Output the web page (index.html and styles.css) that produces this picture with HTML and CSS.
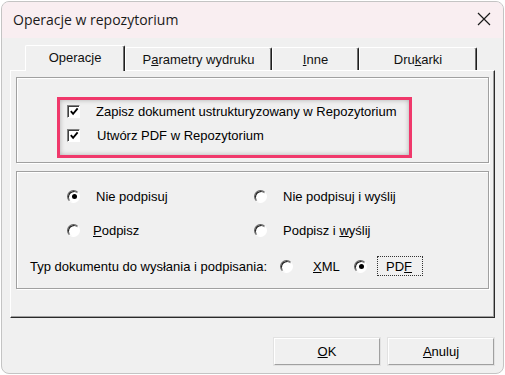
FILE: index.html
```html
<!DOCTYPE html>
<html lang="pl">
<head>
<meta charset="utf-8">
<link rel="stylesheet" href="styles.css">
</head>
<body>
<div class="window">
  <div class="titlebar">
    <span class="title">Operacje w repozytorium</span>
    <svg class="close" width="14" height="14" viewBox="0 0 14 14"><path d="M1 1 L13 13 M13 1 L1 13" stroke="#1a1a1a" stroke-width="1.2" fill="none"/></svg>
  </div>
  <div class="body">
    <div class="tabs">
      <div class="tab tab-sel t1">Operacje</div>
      <div class="tab t2">P<u>a</u>rametry wydruku</div>
      <div class="tab t3"><u>I</u>nne</div>
      <div class="tab t4">Dru<u>k</u>arki</div>
    </div>
    <div class="panel">
      <div class="group g1">
        <div class="highlight">
          <div class="row"><span class="check"><svg width="11" height="11" viewBox="0 0 11 11"><path d="M2 5 L4.5 8 L9.5 2" stroke="#000" stroke-width="2" fill="none"/></svg></span><span class="lbl">Zapisz dokument ustrukturyzowany w Repozytorium</span></div>
          <div class="row"><span class="check"><svg width="11" height="11" viewBox="0 0 11 11"><path d="M2 5 L4.5 8 L9.5 2" stroke="#000" stroke-width="2" fill="none"/></svg></span><span class="lbl lbl2">Utwórz PDF w Repozytorium</span></div>
        </div>
      </div>
      <div class="group g2">
        <div class="grid">
          <div class="opt"><span class="radio on"></span><span class="lbl">Nie podpisuj</span></div>
          <div class="opt"><span class="radio"></span><span class="lbl">Nie podpisuj i wyślij</span></div>
          <div class="opt"><span class="radio"></span><span class="lbl lbl-p"><u>P</u>odpisz</span></div>
          <div class="opt"><span class="radio"></span><span class="lbl lbl-q">Podpisz i <u>w</u>yślij</span></div>
        </div>
        <div class="typ">
          <span class="typ-label">Typ dokumentu do wysłania i podpisania:</span>
          <span class="radio"></span>
          <span class="xml"><u>X</u>ML</span>
          <span class="radio on"></span>
          <span class="pdf">PD<u>F</u></span>
        </div>
      </div>
    </div>
    <div class="buttons">
      <button class="btn"><u>O</u>K</button>
      <button class="btn"><u>A</u>nuluj</button>
    </div>
  </div>
</div>
</body>
</html>
```
FILE: styles.css
```css
html, body {
  margin: 0;
  padding: 0;
  background: #ffffff;
}
body {
  font-family: "Liberation Sans", Arial, sans-serif;
  font-size: 13px;
  color: #000;
}
.window {
  box-sizing: border-box;
  width: 503px;
  height: 373px;
  margin: 1px 0 0 1px;
  border: 1px solid #c4c4c4;
  border-radius: 8px;
  overflow: hidden;
  background: #f0f0f0;
}
.titlebar {
  height: 36px;
  background: #f9eef1;
  display: flex;
  align-items: center;
  justify-content: space-between;
  padding: 0 12px 0 11px;
}
.title {
  font-family: "Open Sans", "Noto Sans", sans-serif;
  font-size: 14px;
  color: #1a1a1a;
  margin-top: -1px;
}
.close {
  display: block;
  margin-top: -2px;
}
.body {
  padding: 7px 8px 0 8px;
}
.tabs {
  display: flex;
  align-items: flex-end;
  height: 25px;
  padding-left: 15px;
}
.tab {
  box-sizing: border-box;
  height: 23px;
  border-top: 1px solid #fff;
  border-left: 1px solid #fff;
  border-right: 1px solid #1e1e1e;
  box-shadow: inset -1px 0 0 #6e6e6e;
  border-radius: 2px 2px 0 0;
  display: flex;
  align-items: center;
  justify-content: center;
  padding-top: 1px;
  color: #111;
}
.tab-sel {
  height: 26px;
  margin-bottom: -1px;
  position: relative;
  z-index: 1;
  background: #f0f0f0;
  padding-top: 0;
  padding-bottom: 2px;
}
.t1 { width: 100px; }
.t2 { width: 147px; }
.t3 { width: 87px; }
.t4 { width: 118px; }
.panel {
  box-sizing: border-box;
  width: 485px;
  height: 248px;
  border-top: 1px solid #fff;
  border-left: 1px solid #fff;
  border-right: 1px solid #2a2a2a;
  border-bottom: 1px solid #2a2a2a;
  box-shadow: inset -1px -1px 0 #a0a0a0;
  padding: 6px 0 0 5px;
}
.group {
  box-sizing: border-box;
  width: 473px;
  border: 1px solid #a0a0a0;
  box-shadow: inset 1px 1px 0 #fff, 1px 1px 0 #fff;
}
.g1 {
  height: 86px;
  padding: 19px 0 0 40px;
}
.g2 {
  height: 118px;
  margin-top: 8px;
  padding-top: 14px;
}
.highlight {
  box-sizing: border-box;
  width: 355px;
  height: 61px;
  border: 3px solid #f0386b;
  box-shadow: inset 0 0 5px rgba(0, 0, 0, 0.28);
  padding: 0 0 0 7px;
  display: flex;
  flex-direction: column;
  gap: 2px;
}
.row {
  height: 22px;
  display: flex;
  align-items: center;
}
.check {
  box-sizing: border-box;
  width: 13px;
  height: 13px;
  background: #fff;
  border: 1px solid;
  border-color: #808080 #fff #fff #808080;
  box-shadow: inset 1px 1px 0 #404040;
  display: flex;
  align-items: center;
  justify-content: center;
  flex: none;
}
.check svg { display: block; margin: 1px 0 0 1px; }
.lbl { margin-left: 16px; white-space: nowrap; }
.lbl2 { margin-left: 17px; }
.lbl-p { margin-left: 13px; }
.lbl-q { margin-left: 16px; }
.grid {
  display: grid;
  grid-template-columns: 187px 1fr;
  row-gap: 14px;
  padding-left: 50px;
}
.opt {
  height: 20px;
  display: flex;
  align-items: center;
}
.radio {
  box-sizing: border-box;
  width: 13px;
  height: 13px;
  border-radius: 50%;
  background: #fff;
  border: 1px solid;
  border-color: #606060 #fff #fff #606060;
  box-shadow: inset 1px 1px 0 #202020;
  flex: none;
  display: flex;
  align-items: center;
  justify-content: center;
}
.radio.on::after {
  content: "";
  width: 5px;
  height: 5px;
  border-radius: 50%;
  background: #000;
  margin: 1px 0 0 1px;
}
.typ {
  display: flex;
  align-items: center;
  height: 20px;
  margin-top: 16px;
  padding-left: 13px;
}
.typ-label {
  width: 250px;
  white-space: nowrap;
}
.xml {
  width: 22px;
  margin-left: 20px;
  margin-right: 19px;
}
.pdf {
  box-sizing: border-box;
  width: 46px;
  height: 20px;
  margin-left: 10px;
  border: 1px dotted #333;
  display: flex;
  align-items: center;
  padding-left: 8px;
}
.buttons {
  display: flex;
  justify-content: flex-end;
  gap: 8px;
  margin-top: 20px;
  padding-right: 1px;
}
.btn {
  box-sizing: border-box;
  width: 106px;
  height: 27px;
  font-family: "Liberation Sans", Arial, sans-serif;
  font-size: 13px;
  color: #000;
  background: #f0f0f0;
  border: 1px solid;
  border-color: #fff #a0a0a0 #a0a0a0 #fff;
  box-shadow: 0 0 0 1px #e2e2e2;
  padding: 0;
}
```
